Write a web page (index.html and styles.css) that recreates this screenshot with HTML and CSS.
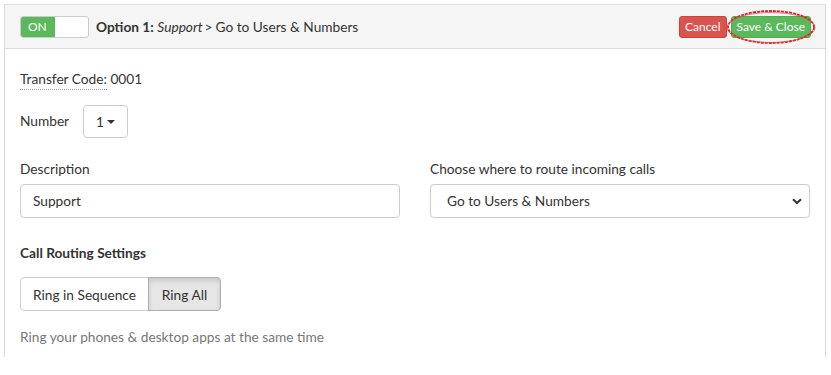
FILE: index.html
```html
<!DOCTYPE html>
<html>
<head>
<meta charset="utf-8">
<link rel="stylesheet" href="styles.css">
</head>
<body>
<div class="panel">
  <div class="panel-head">
    <div class="toggle"><span class="toggle-on">ON</span><span class="toggle-off"></span></div>
    <div class="title"><b>Option 1:</b> <i>Support</i><span class="chev">&gt;</span>Go to Users &amp; Numbers</div>
    <div class="actions">
      <button class="btn btn-danger">Cancel</button>
      <button class="btn btn-success">Save &amp; Close</button>
      <svg class="annot" width="92" height="38" viewBox="0 0 92 38"><ellipse cx="46" cy="19" rx="43" ry="16" fill="none" stroke="#d9232a" stroke-width="1.8" stroke-dasharray="3 1"/><ellipse cx="46" cy="19.5" rx="44" ry="15" fill="none" stroke="#e04848" stroke-width="1" opacity="0.7"/></svg>
    </div>
  </div>
  <div class="panel-body">
    <div class="code"><span class="dotted">Transfer Code:</span> 0001</div>
    <div class="number-row">
      <span class="lbl">Number</span>
      <button class="num-btn">1<span class="caret"></span></button>
    </div>
    <div class="cols">
      <div class="field">
        <label class="flabel">Description</label>
        <div class="input">Support</div>
      </div>
      <div class="field">
        <label class="flabel">Choose where to route incoming calls</label>
        <div class="input select">Go to Users &amp; Numbers
          <svg class="chevron" width="10" height="7" viewBox="0 0 10 7"><path d="M1 1.2 L5 5 L9 1.2" fill="none" stroke="#333" stroke-width="2"/></svg>
        </div>
      </div>
    </div>
    <div class="section">Call Routing Settings</div>
    <div class="btn-group">
      <button class="seg">Ring in Sequence</button>
      <button class="seg active">Ring All</button>
    </div>
    <div class="help">Ring your phones &amp; desktop apps at the same time</div>
  </div>
</div>
</body>
</html>
```
FILE: styles.css
```css
* { box-sizing: border-box; }
html, body { margin: 0; padding: 0; background: #fff; }
body {
  font-family: Lato, "Open Sans", sans-serif;
  font-size: 13.7px;
  color: #333;
}
.panel {
  margin: 4px 0 0 4px;
  width: 822px;
  height: 353px;
  border: 1px solid #dcdcdc;
  border-bottom: none;
  overflow: hidden;
}
.panel-head {
  height: 44px;
  background: #f5f5f5;
  border-bottom: 1px solid #dcdcdc;
  display: flex;
  align-items: center;
  padding: 0 14px 0 15px;
}
.toggle {
  display: flex;
  width: 69px;
  height: 22px;
  border: 1px solid #ccc;
  border-radius: 3px;
  overflow: hidden;
  background: #fff;
}
.toggle-on {
  width: 34px;
  background: #5cb85c;
  color: #fff;
  font-size: 12px;
  line-height: 20px;
  padding-left: 7px;
}
.toggle-off { flex: 1; }
.title {
  margin-left: 7px;
  color: #333;
  white-space: nowrap;
}
.title b { font-weight: 700; }
.chev { margin: 0 3px 0 2px; }
.actions {
  margin-left: auto;
  display: flex;
  gap: 4px;
  position: relative;
}
.btn {
  font-family: inherit;
  font-size: 12px;
  color: #fff;
  border: 1px solid transparent;
  border-radius: 3px;
  height: 22px;
  padding: 0 5px;
  line-height: 20px;
  white-space: nowrap;
}
.btn-danger { background: #d9534f; border-color: #d43f3a; }
.btn-success { background: #5cb85c; border-color: #4cae4c; }
.annot {
  position: absolute;
  right: -6px;
  top: -8px;
  pointer-events: none;
}
.panel-body { padding: 0 15px; }
.code {
  margin-top: 21px;
  line-height: 18px;
}
.dotted {
  border-bottom: 1px dotted #999;
  padding-bottom: 2px;
}
.number-row {
  margin-top: 17px;
  display: flex;
  align-items: flex-start;
}
.lbl { margin-top: 7px; }
.num-btn {
  margin-left: 14px;
  font-family: inherit;
  font-size: 13.7px;
  color: #333;
  background: #fff;
  border: 1px solid #ccc;
  border-radius: 4px;
  width: 45px;
  height: 33px;
  padding: 0;
  display: flex;
  align-items: center;
  justify-content: center;
}
.caret {
  display: inline-block;
  margin-left: 3px;
  border-left: 4px solid transparent;
  border-right: 4px solid transparent;
  border-top: 4px solid #333;
}
.cols {
  margin-top: 21px;
  display: grid;
  grid-template-columns: 1fr 1fr;
  column-gap: 30px;
}
.flabel {
  display: block;
  line-height: 20px;
  margin-bottom: 5px;
}
.input {
  height: 34px;
  border: 1px solid #ccc;
  border-radius: 4px;
  padding: 0 12px;
  line-height: 32px;
  position: relative;
}
.select { padding-left: 16px; }
.chevron {
  position: absolute;
  right: 7px;
  top: 13px;
}
.section {
  margin-top: 25px;
  font-weight: 700;
  line-height: 20px;
}
.btn-group {
  margin-top: 14px;
  display: flex;
}
.seg {
  font-family: inherit;
  font-size: 13.7px;
  color: #333;
  background: #fff;
  border: 1px solid #ccc;
  height: 34px;
  padding: 0 12px;
  white-space: nowrap;
}
.seg:first-child { border-radius: 4px 0 0 4px; width: 129px; }
.seg.active {
  background: #e6e6e6;
  border-color: #adadad;
  border-radius: 0 4px 4px 0;
  margin-left: -1px;
  width: 73px;
  box-shadow: inset 0 3px 5px rgba(0,0,0,0.125);
}
.help {
  margin-top: 16px;
  color: #777;
  line-height: 20px;
}
```
